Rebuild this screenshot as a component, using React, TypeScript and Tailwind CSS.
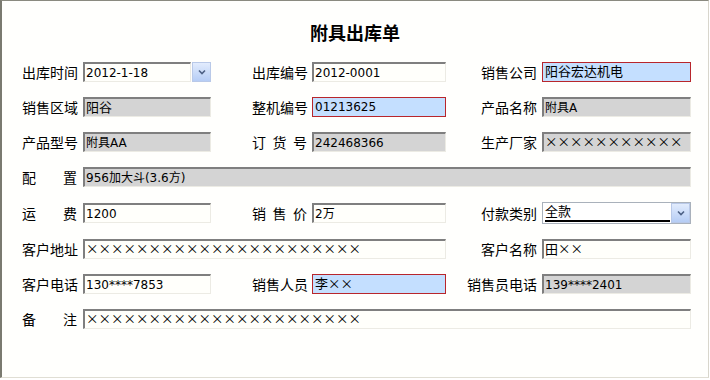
import React from "react";
import clsx from "clsx";

type Tone = "white" | "gray" | "blue";

const inputFont = { fontFamily: '"DejaVu Sans", "Noto Sans CJK SC", sans-serif' };

const Box = ({ tone, className, children }: { tone: Tone; className: string; children?: React.ReactNode }) => (
  <div
    className={clsx(
      "h-[20px] flex items-center pl-[1px] text-[12px] text-black whitespace-nowrap overflow-hidden",
      tone === "white" && "bg-[#fffffb] border-t-2 border-l-2 border-r border-b border-t-[#7f7f7f] border-l-[#7f7f7f] border-r-[#ecebe4] border-b-[#ecebe4]",
      tone === "gray" && "bg-[#d4d4d4] border-t-2 border-l-2 border-r border-b border-t-[#7f7f7f] border-l-[#7f7f7f] border-r-[#ecebe4] border-b-[#ecebe4]",
      tone === "blue" && "bg-[#c4dfff] border border-[#b8262c] pl-[2px]",
      className
    )}
    style={inputFont}
  >
    {children}
  </div>
);

// full-width crosses used as placeholder text
const Xs = ({ n }: { n: number }) => (
  <span className="text-[12.5px]" style={{ fontFamily: '"Noto Sans CJK SC", sans-serif' }}>
    {"×".repeat(n)}
  </span>
);

const Label = ({ text, className }: { text: string; className: string }) => (
  <div className={clsx("text-[14px] text-black leading-[20px] h-[20px] whitespace-nowrap", className)}>{text}</div>
);

const Justified = ({ text, className }: { text: string; className: string }) => (
  <div className={clsx("text-[14px] text-black leading-[20px] h-[20px] text-justify [text-align-last:justify]", className)}>
    {text.split("").join(" ")}
  </div>
);

const DropBtn = ({ className }: { className?: string }) => (
  <div
    className={clsx(
      "h-[20px] w-[19px] flex items-center justify-center border border-[#b9c9e8] bg-gradient-to-b from-[#e2ecfd] to-[#b6cdf5]",
      className
    )}
  >
    <svg width="8" height="6" viewBox="0 0 8 6">
      <polyline points="1,1.5 4,4.5 7,1.5" fill="none" stroke="#4d6185" strokeWidth="1.6" />
    </svg>
  </div>
);

export default function App() {
  return (
    <div
      className="w-[710px] h-[380px] bg-white"
      style={{ fontFamily: '"Noto Sans CJK SC", "Noto Sans", sans-serif' }}
    >
      <div className="w-[709px] h-[378px] bg-[#fffffd] border-l-2 border-t border-r border-b border-l-[#7a7a70] border-t-[#8a8a80] border-r-[#d8d6cc] border-b-[#e0ded4]">
        <div className="mt-[19px] h-[24px] flex items-center justify-center text-[18px] font-bold text-black">
          附具出库单
        </div>

        <div className="mt-[18px] pl-[20px] flex flex-col gap-[15px]">
          {/* row 1 */}
          <div className="flex items-center">
            <Label text="出库时间" className="w-[55px]" />
            <Box tone="white" className="ml-[6px] w-[108px]">2012-1-18</Box>
            <DropBtn className="ml-[1px]" />
            <Label text="出库编号" className="ml-[41px] w-[55px]" />
            <Box tone="white" className="ml-[5px] w-[134px]">2012-0001</Box>
            <Label text="销售公司" className="w-[91px] text-right" />
            <Box tone="blue" className="ml-[5px] w-[149px] text-[13px]">阳谷宏达机电</Box>
          </div>

          {/* row 2 */}
          <div className="flex items-center">
            <Label text="销售区域" className="w-[55px]" />
            <Box tone="gray" className="ml-[6px] w-[128px] text-[13px]">阳谷</Box>
            <Label text="整机编号" className="ml-[41px] w-[55px]" />
            <Box tone="blue" className="ml-[5px] w-[134px]">01213625</Box>
            <Label text="产品名称" className="w-[91px] text-right" />
            <Box tone="gray" className="ml-[5px] w-[149px]">附具A</Box>
          </div>

          {/* row 3 */}
          <div className="flex items-center">
            <Label text="产品型号" className="w-[55px]" />
            <Box tone="gray" className="ml-[6px] w-[128px]">附具AA</Box>
            <Justified text="订货号" className="ml-[41px] w-[55px]" />
            <Box tone="gray" className="ml-[5px] w-[134px]">242468366</Box>
            <Label text="生产厂家" className="w-[91px] text-right" />
            <Box tone="gray" className="ml-[5px] w-[149px]"><Xs n={11} /></Box>
          </div>

          {/* row 4 */}
          <div className="flex items-center">
            <Justified text="配置" className="w-[55px]" />
            <Box tone="gray" className="ml-[6px] w-[608px]">956加大斗(3.6方)</Box>
          </div>

          {/* row 5 */}
          <div className="flex items-center">
            <Justified text="运费" className="w-[55px]" />
            <Box tone="white" className="ml-[6px] w-[128px]">1200</Box>
            <Justified text="销售价" className="ml-[41px] w-[55px]" />
            <Box tone="white" className="ml-[5px] w-[134px]">2万</Box>
            <Label text="付款类别" className="w-[91px] text-right" />
            <div className="ml-[5px] w-[149px] h-[22px] border border-[#a9b1bb] bg-white flex items-center pl-[2px]">
              <div
                className="w-[127px] h-[18px] text-[13px] leading-[16px] border-b-2 border-black"
                style={inputFont}
              >
                全款
              </div>
              <DropBtn className="ml-[1px] h-[19px] w-[17px]" />
            </div>
          </div>

          {/* row 6 */}
          <div className="flex items-center">
            <Label text="客户地址" className="w-[55px]" />
            <Box tone="white" className="ml-[6px] w-[363px]"><Xs n={22} /></Box>
            <Label text="客户名称" className="w-[91px] text-right" />
            <Box tone="white" className="ml-[5px] w-[149px] text-[13px]">田<Xs n={2} /></Box>
          </div>

          {/* row 7 */}
          <div className="flex items-center">
            <Label text="客户电话" className="w-[55px]" />
            <Box tone="white" className="ml-[6px] w-[128px]">130****7853</Box>
            <Label text="销售人员" className="ml-[41px] w-[55px]" />
            <Box tone="blue" className="ml-[5px] w-[134px] text-[13px]">李<Xs n={2} /></Box>
            <Label text="销售员电话" className="w-[91px] text-right" />
            <Box tone="gray" className="ml-[5px] w-[149px]">139****2401</Box>
          </div>

          {/* row 8 */}
          <div className="flex items-center">
            <Justified text="备注" className="w-[55px]" />
            <Box tone="white" className="ml-[6px] w-[608px]"><Xs n={22} /></Box>
          </div>
        </div>
      </div>
    </div>
  );
}
